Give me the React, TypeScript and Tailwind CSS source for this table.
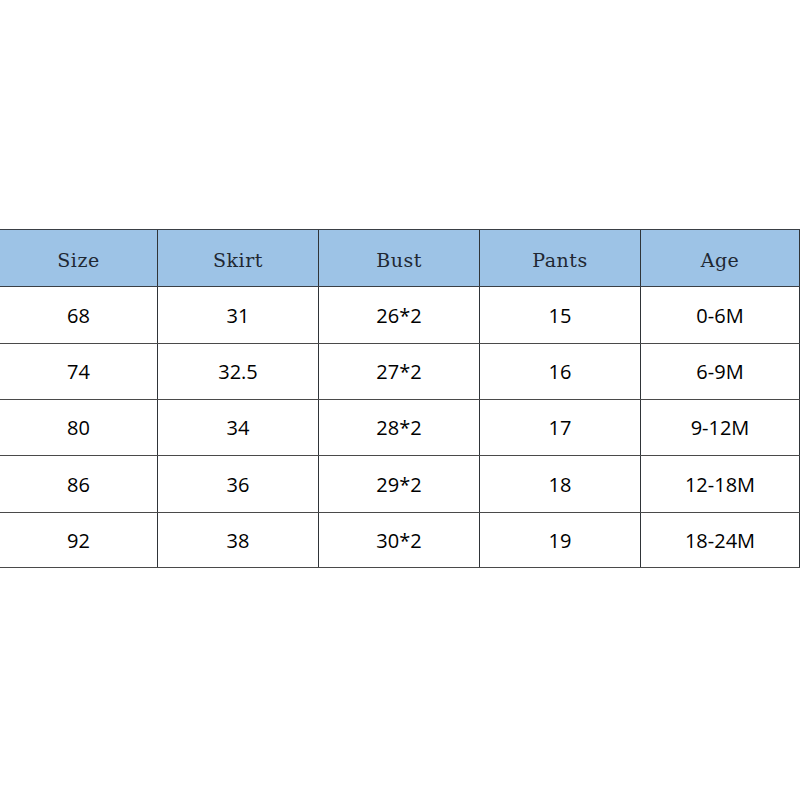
import React from "react";

const headers = ["Size", "Skirt", "Bust", "Pants", "Age"];

const rows = [
  ["68", "31", "26*2", "15", "0-6M"],
  ["74", "32.5", "27*2", "16", "6-9M"],
  ["80", "34", "28*2", "17", "9-12M"],
  ["86", "36", "29*2", "18", "12-18M"],
  ["92", "38", "30*2", "19", "18-24M"],
];

// per-row heights so the rules land where the sheet has them
const rowHeights = ["h-[56px]", "h-[55px]", "h-[55px]", "h-[56px]", "h-[54px]"];

const colWidths = [
  "w-[158px]",
  "w-[161px]",
  "w-[161px]",
  "w-[161px]",
  "w-[159px]",
];

export default function App() {
  return (
    <div className="w-[800px] h-[800px] bg-white">
      <div className="pt-[229px]">
        <div className="border-t border-[#3a3f45]">
          {/* Header */}
          <div className="flex h-[57px] bg-[#9dc3e6] border-b border-[#3a3f45]">
            {headers.map((h, i) => (
              <div
                key={h}
                className={`${colWidths[i]} flex items-center justify-center pt-[4px] border-r border-[#2f3438] text-[19px] text-[#1f2833] tracking-[0.5px]`}
                style={{ fontFamily: '"DejaVu Serif", serif' }}
              >
                {h}
              </div>
            ))}
          </div>

          {/* Body */}
          {rows.map((row, r) => (
            <div
              key={r}
              className={`flex ${rowHeights[r]} box-content border-b border-[#4a4a4a]`}
            >
              {row.map((cell, i) => (
                <div
                  key={i}
                  className={`${colWidths[i]} flex items-center justify-center pt-[1px] border-r border-[#2f3438] text-[20px] text-black`}
                  style={{ fontFamily: '"Open Sans", sans-serif' }}
                >
                  {cell}
                </div>
              ))}
            </div>
          ))}
        </div>
      </div>
    </div>
  );
}
